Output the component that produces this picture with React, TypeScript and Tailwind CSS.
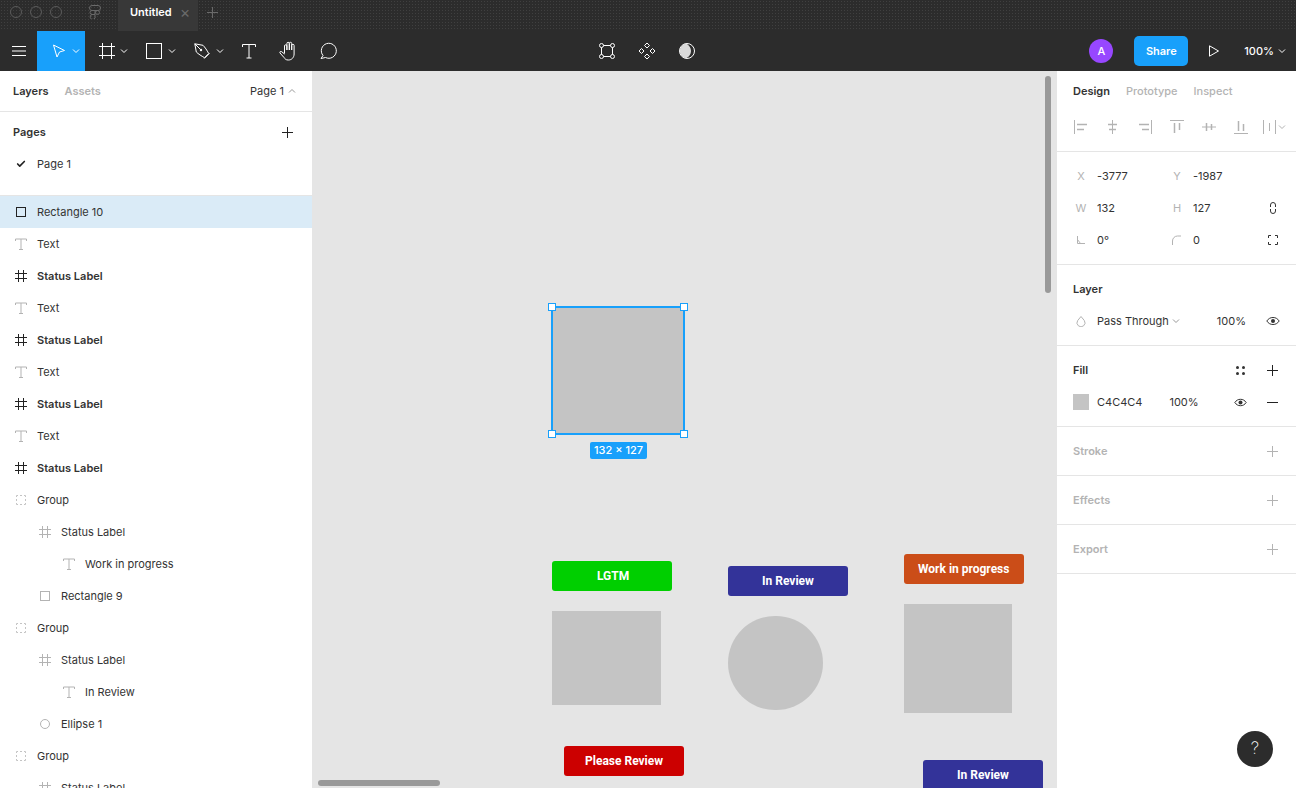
import { Check } from 'lucide-react'
import type { ReactNode } from 'react'

const Svg = ({ size = 16, className = '', children }: { size?: number; className?: string; children: ReactNode }) => (
  <svg className={`shrink-0 ${className}`} fill="none" height={size} stroke="currentColor" strokeWidth="1" viewBox={`0 0 ${size} ${size}`} width={size}>
    {children}
  </svg>
)

const Chev = ({ className = '', up }: { className?: string; up?: boolean }) => (
  <Svg className={className} size={8}>
    <path d={up ? 'M1 5.500 4 2.500 7 5.500' : 'M1 2.500 4 5.500 7 2.500'} />
  </Svg>
)
const PlusIcon = ({ className = '' }: { className?: string }) => (
  <Svg className={className} size={11}>
    <path d="M5.500 0v11M0 5.500h11" />
  </Svg>
)
const EyeIcon = ({ className = '', size = 14 }: { className?: string; size?: number }) => (
  <Svg className={className} size={size}>
    <path d={size === 14 ? 'M.8 7C2.500 4.500 4.500 3.500 7 3.500S11.500 4.500 13.200 7C11.500 9.500 9.500 10.500 7 10.500S2.500 9.500.8 7z' : 'M.8 6.500C2.300 4.300 4.200 3.300 6.500 3.300S10.700 4.300 12.200 6.500C10.700 8.700 8.800 9.700 6.500 9.700S2.300 8.700.8 6.500z'} />
    <circle cx={size / 2} cy={size / 2} fill="currentColor" r="2" stroke="none" />
  </Svg>
)
const FrameIcon = ({ className = '', size = 14 }: { className?: string; size?: number }) => (
  <Svg className={className} size={size}>
    <path d={size === 14 ? 'M4.500 1v12M9.500 1v12M1 4.500h12M1 9.500h12' : 'M3.500 0v16M12.500 0v16M0 3.500h16M0 12.500h16'} />
  </Svg>
)
const TextIcon = ({ className = '' }: { className?: string }) => (
  <Svg className={className} size={14}>
    <path d="M7 2v10.500M1.500 4V2h11v2M5 12.500h4" />
  </Svg>
)
const GroupIcon = () => (
  <Svg className="ml-[1px] text-[#c4c4c4]" size={10}>
    <path d="M.5 2V.5H2M4 .5h2M8 .5h1.500V2M.5 4v2M9.500 4v2M.5 8v1.500H2M4 9.500h2M8 9.500h1.500V8" />
  </Svg>
)
const SquareIcon = ({ className = '' }: { className?: string }) => (
  <Svg className={className} size={12}>
    <rect height="9" width="9" x="1.500" y="1.500" />
  </Svg>
)
const CircleIcon = () => (
  <Svg className="text-[#b3b3b3]" size={12}>
    <circle cx="6" cy="6" r="4.500" />
  </Svg>
)

const Row = ({ icon, label, pad = 'pl-[15px]', strong, selected }: { icon: ReactNode; label: string; pad?: string; strong?: boolean; selected?: boolean }) => (
  <div className={`flex h-8 items-center text-[11px] text-[#333] ${pad} ${selected ? 'bg-[#daebf7]' : ''} ${strong ? 'font-semibold' : ''}`}>
    <span className="flex w-[22px] shrink-0 items-center">{icon}</span>
    <span>{label}</span>
  </div>
)

const LayersList = () => (
  <div className="min-h-0 flex-1 overflow-hidden">
    <Row icon={<SquareIcon className="text-[#222]" />} label="Rectangle 10" selected />
    <Row icon={<TextIcon className="-ml-[1px] text-[#b3b3b3]" />} label="Text" />
    <Row icon={<FrameIcon className="-ml-[1px] text-[#222]" />} label="Status Label" strong />
    <Row icon={<TextIcon className="-ml-[1px] text-[#b3b3b3]" />} label="Text" />
    <Row icon={<FrameIcon className="-ml-[1px] text-[#222]" />} label="Status Label" strong />
    <Row icon={<TextIcon className="-ml-[1px] text-[#b3b3b3]" />} label="Text" />
    <Row icon={<FrameIcon className="-ml-[1px] text-[#222]" />} label="Status Label" strong />
    <Row icon={<TextIcon className="-ml-[1px] text-[#b3b3b3]" />} label="Text" />
    <Row icon={<FrameIcon className="-ml-[1px] text-[#222]" />} label="Status Label" strong />
    <Row icon={<GroupIcon />} label="Group" />
    <Row icon={<FrameIcon className="-ml-[1px] text-[#b3b3b3]" />} label="Status Label" pad="pl-[39px]" />
    <Row icon={<TextIcon className="-ml-[1px] text-[#b3b3b3]" />} label="Work in progress" pad="pl-[63px]" />
    <Row icon={<SquareIcon className="text-[#b3b3b3]" />} label="Rectangle 9" pad="pl-[39px]" />
    <Row icon={<GroupIcon />} label="Group" />
    <Row icon={<FrameIcon className="-ml-[1px] text-[#b3b3b3]" />} label="Status Label" pad="pl-[39px]" />
    <Row icon={<TextIcon className="-ml-[1px] text-[#b3b3b3]" />} label="In Review" pad="pl-[63px]" />
    <Row icon={<CircleIcon />} label="Ellipse 1" pad="pl-[39px]" />
    <Row icon={<GroupIcon />} label="Group" />
    <Row icon={<FrameIcon className="-ml-[1px] text-[#b3b3b3]" />} label="Status Label" pad="pl-[39px]" />
  </div>
)

const LeftPanel = () => (
  <aside className="flex w-[312px] shrink-0 flex-col overflow-hidden bg-white">
    <div className="flex h-[41px] shrink-0 items-center border-b border-[#e5e5e5] pl-[13px] pr-4 text-[11px]">
      <span className="font-semibold text-[#333]">Layers</span>
      <span className="ml-4 font-semibold text-[#b3b3b3]">Assets</span>
      <span className="ml-auto text-[#333]">Page 1</span>
      <Chev className="ml-[4px] text-[#999]" up />
    </div>
    <div className="flex h-[40px] shrink-0 items-center justify-between pl-[13px] pr-[19px] text-[11px] font-semibold text-[#333]">
      <span>Pages</span>
      <PlusIcon className="text-[#222]" />
    </div>
    <div className="flex h-6 shrink-0 items-center pl-4 text-[11px] text-[#333]">
      <span className="flex w-[21px] items-center"><Check className="text-[#222]" size={10} strokeWidth={4} /></span>
      <span>Page 1</span>
    </div>
    <div className="h-[20px] shrink-0 border-b border-[#e5e5e5]" />
    <LayersList />
  </aside>
)

const labels = [
  { name: 'LGTM', cls: 'left-[240px] top-[490px] bg-[#00cf00] pl-[45px]' },
  { name: 'In Review', cls: 'left-[416px] top-[495px] bg-[#333399] pl-[34px]' },
  { name: 'Work in progress', cls: 'left-[592px] top-[483px] bg-[#cb4d18] pl-[14px]' },
  { name: 'Please Review', cls: 'left-[252px] top-[675px] bg-[#cc0000] pl-[21px]' },
  { name: 'In Review', cls: 'left-[611px] top-[689px] bg-[#333399] pl-[34px]' },
]

const Canvas = () => (
  <main className="relative min-w-0 flex-1 overflow-hidden bg-[#e5e5e5]">
    <div className="absolute left-[240px] top-[236px] h-[127px] w-[132px] bg-[#c4c4c4] outline-2 -outline-offset-1 outline-[#18a0fb]" />
    {[
      'left-[236px] top-[232px]',
      'left-[368px] top-[232px]',
      'left-[236px] top-[359px]',
      'left-[368px] top-[359px]',
    ].map((pos) => (
      <span className={`absolute h-2 w-2 border border-[#18a0fb] bg-white ${pos}`} key={pos} />
    ))}
    <span className="absolute left-[278px] top-[371px] flex h-[17px] w-[57px] items-center justify-center rounded-[2px] bg-[#18a0fb] text-[11px] font-medium text-white">
      132 × 127
    </span>

    {labels.map((item) => (
      <div className={`absolute flex h-[30px] w-[120px] items-center rounded-[3px] font-['Roboto',sans-serif] text-[12px] font-bold text-white ${item.cls}`} key={item.name + item.cls}>
        {item.name}
      </div>
    ))}

    <div className="absolute left-[240px] top-[540px] h-[94px] w-[109px] bg-[#c4c4c4]" />
    <div className="absolute left-[416px] top-[545px] h-[94px] w-[95px] rounded-full bg-[#c4c4c4]" />
    <div className="absolute left-[592px] top-[533px] h-[109px] w-[108px] bg-[#c4c4c4]" />

    <div className="absolute left-[733px] top-[5px] h-[217px] w-[6px] rounded-full bg-[#999]" />
    <div className="absolute left-[6px] top-[709px] h-[6px] w-[122px] rounded-full bg-[#999]" />
  </main>
)

const Align = ({ line, bars }: { line: string; bars: string }) => (
  <Svg size={14}>
    <path d={line} />
    <path d={bars} strokeWidth="1.500" />
  </Svg>
)

const AlignIcons = () => (
  <div className="flex h-[30px] items-center gap-[18px] pl-[17px] text-[#b3b3b3]">
    <Align bars="M3 4.500h10M3 9.500h7" line="M.5 0v14" />
    <Align bars="M2 4.500h9M3 9.500h7" line="M6.500 0v14" />
    <Align bars="M1 4.500h10M4 9.500h7" line="M13.500 0v14" />
    <Align bars="M4.500 3v10M9.500 3v7" line="M0 .5h14" />
    <Align bars="M4.500 3v8M9.500 4v6" line="M0 7h14" />
    <Align bars="M4.500 1v10M9.500 4v7" line="M0 13.500h14" />
    <span className="-ml-[3px] flex items-center gap-[1px]">
      <Svg size={14}><path d="M.5 0v14M12.500 0v14M6.500 3v8" /></Svg>
      <Chev />
    </span>
  </div>
)

const PropRow = ({ a, av, b, bv, action }: { a: ReactNode; av: string; b: ReactNode; bv: string; action?: ReactNode }) => (
  <div className="flex h-8 items-center text-[11px] text-[#333]">
    <span className="flex w-[40px] justify-center pl-2 text-[#b3b3b3]">{a}</span>
    <span className="w-[56px]">{av}</span>
    <span className="flex w-[40px] justify-center pl-2 text-[#b3b3b3]">{b}</span>
    <span>{bv}</span>
    <span className="ml-auto flex w-4 justify-center text-[#333]">{action}</span>
  </div>
)

const SectionTitle = ({ label }: { label: string }) => (
  <div className="flex h-[49px] shrink-0 items-center justify-between border-b border-[#e5e5e5] pl-4 pr-[18px] text-[11px] font-semibold text-[#b3b3b3]">
    <span>{label}</span>
    <PlusIcon className="text-[#b3b3b3]" />
  </div>
)

const RightPanel = () => (
  <aside className="relative flex w-[239px] shrink-0 flex-col bg-white">
    <div className="h-[81px] shrink-0 border-b border-[#e5e5e5]">
      <div className="flex h-[41px] items-center gap-4 pl-4 text-[11px]">
        <span className="font-semibold text-[#333]">Design</span>
        <span className="font-medium text-[#b3b3b3]">Prototype</span>
        <span className="font-medium text-[#b3b3b3]">Inspect</span>
      </div>
      <AlignIcons />
    </div>
    <div className="h-[113px] shrink-0 border-b border-[#e5e5e5] pr-[15px] pt-2">
      <PropRow a="X" av="-3777" b="Y" bv="-1987" />
      <PropRow
        a="W"
        av="132"
        action={<Svg size={12}><path d="M3.500 5V3a2.500 2.500 0 0 1 5 0v2M3.500 7v2a2.500 2.500 0 0 0 5 0V7" /></Svg>}
        b="H"
        bv="127"
      />
      <PropRow
        a={<Svg size={10}><path d="M1.500 1v7.500H9M1.500 4.500l3 4" /></Svg>}
        av="0°"
        action={<Svg size={12}><path d="M1.500 4V1.500H4M8 1.500h2.500V4M1.500 8v2.500H4M8 10.500h2.500V8" /></Svg>}
        b={<Svg size={12}><path d="M1.500 11V7a5 5 0 0 1 5-5H10" /></Svg>}
        bv="0"
      />
    </div>
    <div className="h-[81px] shrink-0 border-b border-[#e5e5e5]">
      <div className="flex h-[49px] items-center pl-4 text-[11px] font-semibold text-[#333]">Layer</div>
      <div className="-mt-[1px] flex h-[16px] items-center pr-[16px] text-[11px] text-[#333]">
        <span className="flex w-[40px] justify-center pl-2 text-[#b3b3b3]">
          <Svg size={12}><path d="M6 1.500 9.300 5.500a4 4 0 1 1-6.600 0z" /></Svg>
        </span>
        <span>Pass Through</span>
        <Chev className="ml-[3px] text-[#999]" />
        <span className="ml-auto mr-[20px]">100%</span>
        <EyeIcon className="text-[#333]" />
      </div>
    </div>
    <div className="h-[81px] shrink-0 border-b border-[#e5e5e5]">
      <div className="flex h-[49px] items-center justify-between pl-4 pr-[18px] text-[11px] font-semibold text-[#333]">
        <span>Fill</span>
        <span className="flex items-center gap-[22px]">
          <Svg size={9}>
            <circle cx="1.500" cy="1.500" fill="currentColor" r="1.500" stroke="none" />
            <circle cx="7.500" cy="1.500" fill="currentColor" r="1.500" stroke="none" />
            <circle cx="1.500" cy="7.500" fill="currentColor" r="1.500" stroke="none" />
            <circle cx="7.500" cy="7.500" fill="currentColor" r="1.500" stroke="none" />
          </Svg>
          <PlusIcon className="text-[#222]" />
        </span>
      </div>
      <div className="-mt-[1px] flex h-[16px] items-center pl-4 pr-[18px] text-[11px] text-[#333]">
        <span className="h-4 w-4 bg-[#c4c4c4]" />
        <span className="ml-2">C4C4C4</span>
        <span className="ml-[27px]">100%</span>
        <EyeIcon className="ml-auto mr-[20px] text-[#333]" size={13} />
        <Svg className="text-[#222]" size={11}><path d="M0 5.500h11" /></Svg>
      </div>
    </div>
    <SectionTitle label="Stroke" />
    <SectionTitle label="Effects" />
    <SectionTitle label="Export" />
    <button className="absolute left-[180px] top-[660px] flex h-9 w-9 items-center justify-center rounded-full bg-[#2c2c2c] text-[17px] font-extralight text-white" type="button">
      ?
    </button>
  </aside>
)

const TitleBar = () => (
  <div className="flex h-[31px] shrink-0 items-center bg-[#2c2c2c] bg-[radial-gradient(#404040_0.7px,transparent_0.9px)] bg-[length:3px_3px] pl-[10px]">
    <span className="-mt-[7px] flex gap-2">
      <span className="h-3 w-3 rounded-full border border-[#5a5a5a]" />
      <span className="h-3 w-3 rounded-full border border-[#5a5a5a]" />
      <span className="h-3 w-3 rounded-full border border-[#5a5a5a]" />
    </span>
    <span className="-mt-[7px] ml-[26px] text-[#6a6a6a]">
      <Svg size={14}>
        <path d="M4 .5h6a2.500 2.500 0 0 1 0 5H4a2.500 2.500 0 0 1 0-5zM4 5.500h3v4H4a2 2 0 0 1 0-4zM9.500 5.500a2 2 0 1 1 0 4 2 2 0 0 1 0-4zM4 9.500h3V11a2.500 2.500 0 1 1-3-1.500z" />
      </Svg>
    </span>
    <div className="ml-[16px] flex h-[31px] w-[80px] items-center bg-[#383838] pb-[7px] pl-3 text-[11px] font-semibold text-white">
      Untitled
      <span className="ml-[8px] text-[16px] font-normal leading-none text-[#6a6a6a]">×</span>
    </div>
    <PlusIcon className="-mt-[7px] ml-[9px] text-[#6a6a6a]" />
  </div>
)

const Toolbar = () => (
  <div className="flex h-10 shrink-0 items-center bg-[#2c2c2c] text-white">
    <div className="flex h-10 w-[37px] items-center justify-center">
      <Svg size={14}><path d="M0 2.500h14M0 7h14M0 11.500h14" /></Svg>
    </div>
    <div className="flex h-10 w-[48px] items-center gap-[6px] bg-[#18a0fb] pl-[15px]">
      <Svg size={14}><path d="M1.500 1l11 5.500-5 1.500L5 13z" /></Svg>
      <Chev />
    </div>
    <div className="flex h-10 w-[48px] items-center gap-[5px] pl-[14px]">
      <FrameIcon size={16} />
      <Chev />
    </div>
    <div className="flex h-10 w-[48px] items-center gap-[6px] pl-[13px]">
      <Svg size={16}><rect height="15" width="15" x=".5" y=".5" /></Svg>
      <Chev />
    </div>
    <div className="flex h-10 w-[48px] items-center gap-[6px] pl-[13px]">
      <Svg size={16}>
        <path d="M.8.8 9 2.300c2 2 4 5 5.700 8.200l-4.200 4.200C7.500 13 4.300 11 2.300 9zM.8.8l5.400 5.400M10.300 15.500l5.200-5.200" />
        <circle cx="7" cy="7" fill="currentColor" r="1.200" stroke="none" />
      </Svg>
      <Chev />
    </div>
    <div className="flex h-10 w-[40px] items-center justify-center">
      <Svg size={16}><path d="M8 1v14M1.500 4V1.500h13V4M5.500 15h5" /></Svg>
    </div>
    <div className="flex h-10 w-[40px] items-center justify-center">
      <Svg size={20}>
        <path d="M5.500 12.500V5a1.200 1.200 0 0 1 2.400 0v4M7.900 9V2.500a1.200 1.200 0 0 1 2.400 0V9M10.300 9V2.500a1.200 1.200 0 0 1 2.400 0V9M12.700 9V4.500a1.200 1.200 0 0 1 2.400 0V13c0 3.500-2.500 6-5.500 6H9c-2 0-3-1-4-2.500L1 12c-.7-1.200.8-2.200 1.700-1.300l2.800 2.300" />
      </Svg>
    </div>
    <div className="flex h-10 w-[40px] items-center justify-center">
      <Svg size={18}><path d="M3 13.500A7.500 7.500 0 1 1 5.500 15.500L1 16.500z" /></Svg>
    </div>

    <div className="ml-[247px] flex items-center gap-[23px] pl-[3px]">
      <Svg size={16}>
        <path d="M2.500 2.500h11v11h-11z" />
        <circle cx="2.500" cy="2.500" fill="#2c2c2c" r="2" />
        <circle cx="13.500" cy="2.500" fill="#2c2c2c" r="2" />
        <circle cx="2.500" cy="13.500" fill="#2c2c2c" r="2" />
        <circle cx="13.500" cy="13.500" fill="#2c2c2c" r="2" />
      </Svg>
      <Svg size={18}>
        <path d="M9 1l2.500 2.500L9 6 6.500 3.500zM9 12l2.500 2.500L9 17l-2.500-2.500zM3.500 6.500 6 9l-2.500 2.500L1 9zM14.500 6.500 17 9l-2.500 2.500L12 9z" />
      </Svg>
      <Svg size={16}>
        <circle cx="8" cy="8" r="7.500" />
        <path d="M7 .6A7.500 7.500 0 0 0 7 15.400C11 13.500 12 10 12 8S11 2.500 7 .6z" fill="#d9d9d9" stroke="none" />
      </Svg>
    </div>

    <div className="ml-auto flex items-center pr-[10px]">
      <span className="flex h-6 w-6 items-center justify-center rounded-full bg-[#9747ff] text-[11px] font-medium text-white">A</span>
      <button className="ml-[21px] h-[30px] w-[54px] rounded-[5px] bg-[#18a0fb] text-[11px] font-semibold text-white" type="button">Share</button>
      <Svg className="ml-[20px]" size={12}><path d="M1.500 .8v10.400L10.500 6z" /></Svg>
      <span className="ml-[24px] text-[11px] font-medium">100%</span>
      <Chev className="ml-[4px]" />
    </div>
  </div>
)

export default function App() {
  return (
    <div className="flex h-[788px] w-[1296px] flex-col overflow-hidden font-['Inter',sans-serif]">
      <TitleBar />
      <Toolbar />
      <div className="flex min-h-0 flex-1">
        <LeftPanel />
        <Canvas />
        <RightPanel />
      </div>
    </div>
  )
}
